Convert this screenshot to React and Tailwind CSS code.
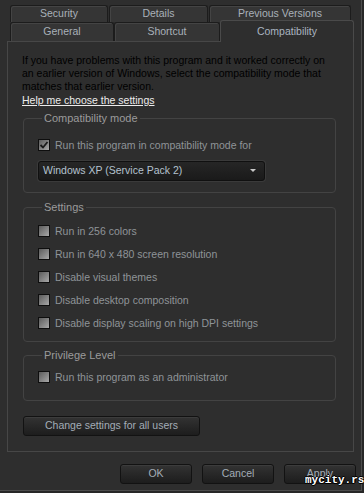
import React from 'react';

const ui = { fontFamily: '"Liberation Sans", Arial, sans-serif' };

function Tab({ label, w, h, active }) {
  if (active) {
    return (
      <div
        className={`${w} relative z-10 -mt-[2px] h-[22px] rounded-t-[3px] border border-b-0 border-[#4a4a4a] bg-[#2e2e2e] flex items-start justify-center pt-[3px] text-[10.5px] text-[#a9b4c0]`}
      >
        {label}
      </div>
    );
  }
  return (
    <div
      className={`${w} ${h} rounded-t-[3px] border border-b-0 border-[#1c1c1c] bg-[#353535] shadow-[inset_1px_1px_0_#444] flex items-center justify-center text-[10.5px] text-[#a9b1b9]`}
    >
      {label}
    </div>
  );
}

function Check({ checked }) {
  return (
    <div className="w-[12px] h-[12px] border border-[#0e0e0e] bg-gradient-to-br from-[#5c5c5c] to-[#a9a9a9] flex items-center justify-center shrink-0">
      {checked && (
        <svg width="10" height="10" viewBox="0 0 10 10">
          <path d="M1.5 5 L4 7.5 L8.5 2" fill="none" stroke="#1a1a1a" strokeWidth="1.8" />
        </svg>
      )}
    </div>
  );
}

function Option({ label, checked }) {
  return (
    <div className="flex items-center gap-[5px] h-[12px]">
      <Check checked={checked} />
      <span className="text-[10.5px] text-[#8f9498] leading-none">{label}</span>
    </div>
  );
}

function Group({ title, className, children }) {
  return (
    <fieldset className={`ml-[1px] w-[313px] rounded-[4px] border border-[#434343] ${className}`}>
      <legend className="ml-[4px] px-[2px] text-[11px] text-[#9b9b9b] leading-none">{title}</legend>
      {children}
    </fieldset>
  );
}

function Btn({ label, w }) {
  return (
    <div className={`${w} h-[20px] rounded-[3px] border border-[#121212] bg-gradient-to-b from-[#333333] to-[#1d1d1d] shadow-[inset_0_1px_0_#3c3c3c] flex items-center justify-center text-[10.5px] text-[#a3adb7]`}>
      {label}
    </div>
  );
}

export default function App() {
  return (
    <div className="w-[364px] h-[493px] bg-[#272727] relative overflow-hidden" style={ui}>
      <div className="w-[362px] h-[491px] bg-[#2e2e2e] border-r border-b border-[#4c4c4c] pt-[5px]">
        {/* tabs */}
        <div className="flex gap-[1px] ml-[10px]">
          <Tab label="Security" w="w-[98px]" h="h-[17px]" />
          <Tab label="Details" w="w-[99px]" h="h-[17px]" />
          <Tab label="Previous Versions" w="w-[142px]" h="h-[17px]" />
        </div>
        <div className="flex ml-[10px]">
          <Tab label="General" w="w-[104px]" h="h-[19px]" />
          <Tab label="Shortcut" w="w-[106px]" h="h-[19px]" />
          <Tab label="Compatibility" w="w-[134px]" active />
        </div>

        {/* panel */}
        <div className="ml-[7px] -mt-[1px] w-[347px] h-[411px] border border-[#474747] px-[14px] pt-[12px]">
          <p className="text-[10.5px] leading-[13px] text-[#000000] w-[312px]">
            If you have problems with this program and it worked correctly on an earlier version of Windows, select the compatibility mode that matches that earlier version.
          </p>
          <div className="text-[10.5px] text-[#ececec] underline leading-[14px]">
            Help me choose the settings
          </div>

          <Group title="Compatibility mode" className="mt-[6px] h-[80px] pl-[14px] pt-[15px]">
            <Option label="Run this program in compatibility mode for" checked />
            <div className="mt-[10px] w-[227px] h-[20px] rounded-[3px] border border-[#101010] bg-gradient-to-b from-[#262626] to-[#1a1a1a] shadow-[0_0_0_1px_#3a3a3a] flex items-center justify-between pl-[4px] pr-[8px]">
              <span className="text-[10.5px] text-[#b4c2cf]">Windows XP (Service Pack 2)</span>
              <svg width="6" height="4" viewBox="0 0 6 4"><path d="M0 0 H6 L3 3 Z" fill="#c9c9c9" /></svg>
            </div>
          </Group>

          <Group title="Settings" className="mt-[9px] h-[140px] pl-[14px] pt-[12px] flex flex-col gap-[11px]">
            <Option label="Run in 256 colors" />
            <Option label="Run in 640 x 480 screen resolution" />
            <Option label="Disable visual themes" />
            <Option label="Disable desktop composition" />
            <Option label="Disable display scaling on high DPI settings" />
          </Group>

          <Group title="Privilege Level" className="mt-[8px] h-[51px] pl-[14px] pt-[10px]">
            <Option label="Run this program as an administrator" />
          </Group>

          <div className="mt-[15px] ml-[1px]">
            <Btn label="Change settings for all users" w="w-[177px]" />
          </div>
        </div>

        {/* dialog buttons */}
        <div className="flex gap-[10px] ml-[120px] mt-[12px]">
          <Btn label="OK" w="w-[72px]" />
          <Btn label="Cancel" w="w-[72px]" />
          <Btn label="Apply" w="w-[72px]" />
        </div>
      </div>

      <div
        className="absolute left-[305px] top-[475px] text-[11px] font-bold text-white leading-none [text-shadow:1px_0_0_#000,-1px_0_0_#000,0_1px_0_#000,0_-1px_0_#000]"
        style={{ fontFamily: '"Liberation Mono", monospace' }}
      >
        mycity.rs
      </div>
    </div>
  );
}
